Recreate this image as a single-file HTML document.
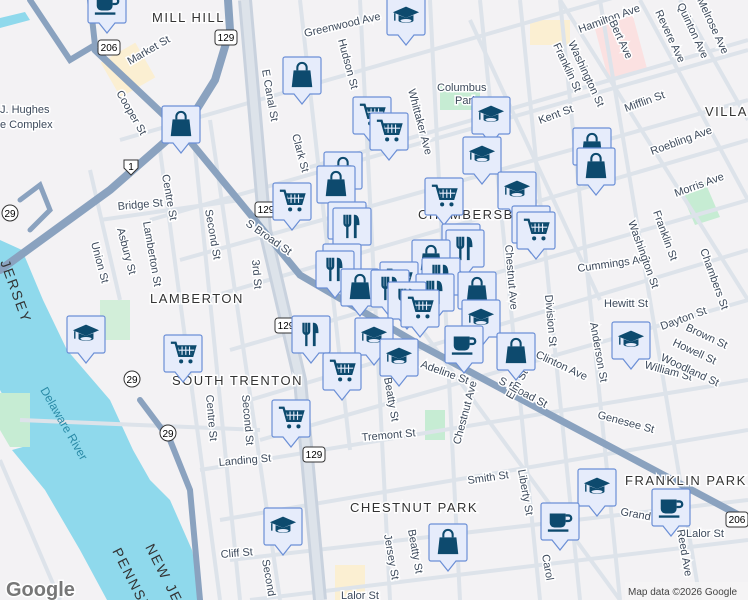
<!DOCTYPE html>
<html><head><meta charset="utf-8"><style>
html,body{margin:0;padding:0;background:#f3f2f4;width:748px;height:600px;overflow:hidden;}
svg{display:block;}
text{font-family:"Liberation Sans",sans-serif;}
.st{font-size:11px;fill:#3d4a5c;stroke:#fff;stroke-width:3px;paint-order:stroke;}
.nb{font-size:13px;fill:#333;letter-spacing:1.5px;stroke:#fff;stroke-width:3px;paint-order:stroke;}
</style></head><body>
<svg width="748" height="600" viewBox="0 0 748 600" xmlns="http://www.w3.org/2000/svg">
<defs>
<symbol id="cart" viewBox="0 0 30 30"><path d="M2 4h5l4 14h14l3-10H9" fill="none" stroke="#0d4a6e" stroke-width="2.5"/><path d="M10 8h17l-3 9H12z" fill="#0d4a6e"/><path d="M14 8v9M18 8v9M22 8v9M10 12h17" stroke="#e6ecfb" stroke-width="1.2"/><circle cx="13" cy="24" r="2.2" fill="#0d4a6e"/><circle cx="23" cy="24" r="2.2" fill="#0d4a6e"/></symbol>
<symbol id="bag" viewBox="0 0 30 30"><path d="M10 10V7a5 5 0 0 1 10 0v3" fill="none" stroke="#0d4a6e" stroke-width="2.2"/><path d="M6 10h18l2 18H4z" fill="#0d4a6e"/></symbol>
<symbol id="fork" viewBox="0 0 30 30"><path d="M7 3v9a3 3 0 0 0 6 0V3M10 3v25" fill="none" stroke="#0d4a6e" stroke-width="2.5"/><path d="M18 3c4 0 5 5 5 11h-3v14h-3V3z" fill="#0d4a6e"/></symbol>
<symbol id="grad" viewBox="0 0 30 30"><path d="M15 5L1 11l14 6 14-6z" fill="#0d4a6e"/><path d="M7 14v6c0 3 16 3 16 0v-6l-8 3z" fill="#0d4a6e"/><ellipse cx="15" cy="20" rx="6" ry="1.8" fill="#e6ecfb"/><path d="M3 12v8" stroke="#0d4a6e" stroke-width="1.5"/></symbol>
<symbol id="cup" viewBox="0 0 30 30"><path d="M4 7h17v10a5 5 0 0 1-5 5H9a5 5 0 0 1-5-5z" fill="#0d4a6e"/><path d="M21 9h3a3 3 0 0 1 0 6h-3" fill="none" stroke="#0d4a6e" stroke-width="2.5"/><rect x="2" y="24" width="22" height="2.5" fill="#0d4a6e"/></symbol>
<g id="mk"><path d="M-19 2a2 2 0 0 1 2-2h34a2 2 0 0 1 2 2v33a2 2 0 0 1-2 2H8l-8 10-8-10h-9a2 2 0 0 1-2-2z" fill="#e6ecfb" stroke="#6b8fd6" stroke-width="1.2"/></g>
</defs>

<!-- water -->
<path d="M0 240 L22 250 L43 300 L67 350 L110 400 L133 450 L150 480 L170 500 L192 550 L202 600 L107 600 L80 550 L45 490 L12 450 L30 445 L0 390 Z" fill="#8fd9ec"/>
<path d="M0 393 L30 393 L30 447 L10 447 L0 430Z" fill="#c6ecd3"/>
<path d="M0 18 L25 12 L30 20 L0 28Z" fill="#8fd9ec"/>
<!-- parks -->
<rect x="440" y="85" width="40" height="25" fill="#c6ecd3"/>
<path d="M680 190 l25 -8 l15 35 l-25 8z" fill="#c6ecd3"/>
<rect x="425" y="410" width="20" height="30" fill="#c6ecd3"/>
<rect x="100" y="300" width="30" height="40" fill="#d2eed9"/>
<rect x="530" y="20" width="40" height="25" fill="#fbefd2"/>
<rect x="600" y="20" width="40" height="55" fill="#fbe1e1" transform="rotate(-15 620 45)"/>
<rect x="108" y="50" width="40" height="40" fill="#fbefd2" transform="rotate(-30 128 70)"/>
<rect x="335" y="565" width="30" height="35" fill="#fbefd2"/>

<!-- minor streets -->
<g stroke="#dde3ea" stroke-width="4" fill="none">
<path d="M120 140 L640 -10"/><path d="M150 220 L748 50"/><path d="M180 260 L748 100"/><path d="M300 170 L748 40"/>
<path d="M200 300 L748 140"/><path d="M230 350 L748 200"/><path d="M250 400 L748 250"/><path d="M260 440 L748 300"/>
<path d="M200 470 L748 380"/><path d="M220 520 L748 430"/><path d="M230 560 L748 500"/><path d="M250 600 L748 540"/>
<path d="M160 150 L220 600"/><path d="M195 150 L240 600"/><path d="M210 120 L280 600"/><path d="M360 0 L390 600"/>
<path d="M300 0 L350 450"/><path d="M430 0 L460 600"/><path d="M480 0 L540 600"/><path d="M520 0 L580 600"/>
<path d="M560 0 L620 600"/><path d="M600 0 L700 600"/><path d="M470 20 L600 300"/><path d="M560 0 L748 300"/>
<path d="M640 0 L748 200"/><path d="M680 0 L748 120"/><path d="M90 170 L120 300"/><path d="M400 300 L620 600"/>
<path d="M100 220 L240 200"/><path d="M20 420 L260 430"/><path d="M0 460 L60 600"/>
</g>
<!-- Route 129 corridor -->
<path d="M245 0 L265 230 L300 380 L320 600" stroke="#c9d2de" stroke-width="14" fill="none"/>
<path d="M245 0 L265 230 L300 380 L320 600" stroke="#dde3ea" stroke-width="8" fill="none"/>
<!-- highways -->
<g stroke="#8aa2bf" fill="none" stroke-linecap="round">
<path d="M0 270 L110 190 L190 120 L215 80 L230 30 L228 0" stroke-width="8"/>
<path d="M30 0 L60 45 L70 60 L95 45 L90 0" stroke-width="6"/>
<path d="M95 50 L185 135 L300 275 L420 345 L560 420 L748 520" stroke-width="7"/>
<path d="M140 400 L170 440 L190 490 L200 600" stroke-width="6"/>
<path d="M20 200 L40 185 L50 210 L30 230" stroke-width="5"/>
</g>
<!-- route markers -->
<g font-size="10" text-anchor="middle">
<circle cx="10" cy="213" r="8" fill="#fff" stroke="#333"/><text x="10" y="217">29</text>
<circle cx="132" cy="379" r="8" fill="#fff" stroke="#333"/><text x="132" y="383">29</text>
<circle cx="168" cy="433" r="8" fill="#fff" stroke="#333"/><text x="168" y="437">29</text>
<rect x="98" y="40" width="22" height="15" rx="3" fill="#fff" stroke="#333"/><text x="109" y="51">206</text>
<rect x="215" y="30" width="22" height="15" rx="3" fill="#fff" stroke="#333"/><text x="226" y="41">129</text>
<rect x="255" y="202" width="22" height="15" rx="3" fill="#fff" stroke="#333"/><text x="266" y="213">129</text>
<rect x="275" y="318" width="22" height="15" rx="3" fill="#fff" stroke="#333"/><text x="286" y="329">129</text>
<rect x="303" y="447" width="22" height="15" rx="3" fill="#fff" stroke="#333"/><text x="314" y="458">129</text>
<rect x="726" y="512" width="22" height="15" rx="3" fill="#fff" stroke="#333"/><text x="737" y="523">206</text>
<path d="M124 160 h14 v8 l-7 7 l-7 -7z" fill="#fff" stroke="#333"/><text x="131" y="170">1</text>
</g>

<!-- labels -->
<text class="nb" x="152" y="22">MILL HILL</text>
<text class="nb" x="150" y="303">LAMBERTON</text>
<text class="nb" x="172" y="385">SOUTH TRENTON</text>
<text class="nb" x="418" y="219">CHAMBERSBURG</text>
<text class="nb" x="350" y="512">CHESTNUT PARK</text>
<text class="nb" x="625" y="485">FRANKLIN PARK</text>
<text class="nb" x="705" y="116">VILLA</text>
<text class="st" x="0" y="113" font-size="14">J. Hughes</text>
<text class="st" x="0" y="128" font-size="14">e Complex</text>
<text class="st" x="437" y="91" fill="#2e8b57" font-size="12">Columbus</text>
<text class="st" x="455" y="104" fill="#2e8b57" font-size="12">Park</text>
<text class="st" transform="translate(305 37) rotate(-13)">Greenwood Ave</text>
<text class="st" transform="translate(580 33) rotate(-20)" font-size="13">Hamilton Ave</text>
<text class="st" transform="translate(130 65) rotate(-30)" font-size="12">Market St</text>
<text class="st" transform="translate(118 210) rotate(-5)">Bridge St</text>
<text class="st" transform="translate(245 225) rotate(35)" font-size="12">S Broad St</text>
<text class="st" transform="translate(498 383) rotate(28)" font-size="12">S Broad St</text>
<text class="st" transform="translate(535 357) rotate(25)" font-size="12">Clinton Ave</text>
<text class="st" transform="translate(578 272) rotate(-8)">Cummings Ave</text>
<text class="st" x="604" y="307">Hewitt St</text>
<text class="st" x="644" y="368" transform="rotate(15 644 368)">William St</text>
<text class="st" x="597" y="418" transform="rotate(15 597 418)">Genesee St</text>
<text class="st" x="362" y="441" transform="rotate(-5 362 441)">Tremont St</text>
<text class="st" x="468" y="484" transform="rotate(-8 468 484)">Smith St</text>
<text class="st" x="219" y="466" transform="rotate(-5 219 466)">Landing St</text>
<text class="st" x="221" y="558" transform="rotate(-5 221 558)">Cliff St</text>
<text class="st" x="341" y="599" font-size="12">Lalor St</text>
<text class="st" x="686" y="537" font-size="12">Lalor St</text>
<text class="st" x="540" y="124" transform="rotate(-20 540 124)">Kent St</text>
<text class="st" x="626" y="112" transform="rotate(-20 626 112)">Mifflin St</text>
<text class="st" x="652" y="155" transform="rotate(-20 652 155)">Roebling Ave</text>
<text class="st" x="676" y="197" transform="rotate(-20 676 197)">Morris Ave</text>
<text class="st" x="568" y="43" transform="rotate(65 568 43)">Washington St</text>
<text class="st" x="553" y="45" transform="rotate(65 553 45)">Franklin St</text>
<text class="st" x="609" y="22" transform="rotate(65 609 22)">Bert Ave</text>
<text class="st" x="655" y="12" transform="rotate(65 655 12)">Revere Ave</text>
<text class="st" x="677" y="5" transform="rotate(65 677 5)">Quinton Ave</text>
<text class="st" x="697" y="0" transform="rotate(65 697 0)">Melrose Ave</text>
<text class="st" x="700" y="250" transform="rotate(70 700 250)" font-size="12">Chambers St</text>
<text class="st" x="338" y="40" transform="rotate(75 338 40)">Hudson St</text>
<text class="st" x="408" y="90" transform="rotate(75 408 90)">Whittaker Ave</text>
<text class="st" x="262" y="70" transform="rotate(80 262 70)">E Canal St</text>
<text class="st" x="292" y="135" transform="rotate(75 292 135)">Clark St</text>
<text class="st" x="162" y="175" transform="rotate(80 162 175)">Centre St</text>
<text class="st" x="205" y="210" transform="rotate(80 205 210)">Second St</text>
<text class="st" x="143" y="222" transform="rotate(80 143 222)">Lamberton St</text>
<text class="st" x="117" y="229" transform="rotate(75 117 229)">Asbury St</text>
<text class="st" x="91" y="243" transform="rotate(75 91 243)">Union St</text>
<text class="st" x="116" y="93" transform="rotate(60 116 93)">Cooper St</text>
<text class="st" x="505" y="245" transform="rotate(85 505 245)">Chestnut Ave</text>
<text class="st" x="545" y="295" transform="rotate(85 545 295)">Division St</text>
<text class="st" x="590" y="323" transform="rotate(80 590 323)">Anderson St</text>
<text class="st" x="628" y="222" transform="rotate(70 628 222)">Washington St</text>
<text class="st" x="653" y="212" transform="rotate(70 653 212)">Franklin St</text>
<text class="st" x="662" y="330" transform="rotate(-20 662 330)">Dayton St</text>
<text class="st" x="685" y="330" transform="rotate(25 685 330)">Brown St</text>
<text class="st" x="672" y="345" transform="rotate(25 672 345)">Howell St</text>
<text class="st" x="660" y="360" transform="rotate(25 660 360)">Woodland St</text>
<text class="st" x="512" y="400" transform="rotate(-60 512 400)">Elm St</text>
<text class="st" x="460" y="445" transform="rotate(-75 460 445)">Chestnut Ave</text>
<text class="st" x="420" y="367" transform="rotate(20 420 367)">Adeline St</text>
<text class="st" x="384" y="378" transform="rotate(80 384 378)">Beatty St</text>
<text class="st" x="542" y="555" transform="rotate(80 542 555)">Carol</text>
<text class="st" x="518" y="470" transform="rotate(80 518 470)">Liberty St</text>
<text class="st" x="384" y="535" transform="rotate(80 384 535)">Jersey St</text>
<text class="st" x="408" y="530" transform="rotate(80 408 530)">Beatty St</text>
<text class="st" x="262" y="560" transform="rotate(80 262 560)">Second</text>
<text class="st" x="242" y="395" transform="rotate(85 242 395)">Second St</text>
<text class="st" x="206" y="395" transform="rotate(85 206 395)">Centre St</text>
<text class="st" x="252" y="260" transform="rotate(85 252 260)">3rd St</text>
<text class="st" x="677" y="530" transform="rotate(80 677 530)">Reed Ave</text>
<text class="st" x="620" y="515" transform="rotate(10 620 515)">Grand St</text>
<text transform="translate(40 390) rotate(60)" font-size="12" fill="#2a8aa6">Delaware River</text>
<text transform="translate(0 262) rotate(70)" font-size="14" fill="#333" letter-spacing="2">JERSEY</text>
<text transform="translate(145 547) rotate(63)" font-size="14" fill="#333" letter-spacing="2">NEW JERSEY</text>
<text transform="translate(112 551) rotate(63)" font-size="14" fill="#333" letter-spacing="2">PENNSYLV</text>
<text x="6" y="596" font-size="20" font-weight="bold" fill="#777" stroke="#fff" stroke-width="3" paint-order="stroke">Google</text>
<rect x="625" y="582" width="123" height="18" fill="#f5f5f5" opacity="0.85"/>
<text x="628" y="595" font-size="10" fill="#444">Map data ©2026 Google</text>

<!-- markers -->
<g>
<g transform="translate(107,-14)"><use href="#mk"/><use href="#cup" x="-14" y="4" width="28" height="28"/></g>
<g transform="translate(406,-2)"><use href="#mk"/><use href="#grad" x="-14" y="4" width="28" height="28"/></g>
<g transform="translate(302,57)"><use href="#mk"/><use href="#bag" x="-14" y="4" width="28" height="28"/></g>
<g transform="translate(372,97)"><use href="#mk"/><use href="#cart" x="-14" y="4" width="28" height="28"/></g>
<g transform="translate(389,113)"><use href="#mk"/><use href="#cart" x="-14" y="4" width="28" height="28"/></g>
<g transform="translate(491,97)"><use href="#mk"/><use href="#grad" x="-14" y="4" width="28" height="28"/></g>
<g transform="translate(482,137)"><use href="#mk"/><use href="#grad" x="-14" y="4" width="28" height="28"/></g>
<g transform="translate(592,128)"><use href="#mk"/><use href="#bag" x="-14" y="4" width="28" height="28"/></g>
<g transform="translate(596,148)"><use href="#mk"/><use href="#bag" x="-14" y="4" width="28" height="28"/></g>
<g transform="translate(181,106)"><use href="#mk"/><use href="#bag" x="-14" y="4" width="28" height="28"/></g>
<g transform="translate(343,152)"><use href="#mk"/><use href="#bag" x="-14" y="4" width="28" height="28"/></g>
<g transform="translate(336,166)"><use href="#mk"/><use href="#bag" x="-14" y="4" width="28" height="28"/></g>
<g transform="translate(292,183)"><use href="#mk"/><use href="#cart" x="-14" y="4" width="28" height="28"/></g>
<g transform="translate(444,178)"><use href="#mk"/><use href="#cart" x="-14" y="4" width="28" height="28"/></g>
<g transform="translate(517,172)"><use href="#mk"/><use href="#grad" x="-14" y="4" width="28" height="28"/></g>
<g transform="translate(347,202)"><use href="#mk"/><use href="#fork" x="-14" y="4" width="28" height="28"/></g>
<g transform="translate(352,208)"><use href="#mk"/><use href="#fork" x="-14" y="4" width="28" height="28"/></g>
<g transform="translate(531,206)"><use href="#mk"/><use href="#cart" x="-14" y="4" width="28" height="28"/></g>
<g transform="translate(536,212)"><use href="#mk"/><use href="#cart" x="-14" y="4" width="28" height="28"/></g>
<g transform="translate(461,224)"><use href="#mk"/><use href="#fork" x="-14" y="4" width="28" height="28"/></g>
<g transform="translate(465,230)"><use href="#mk"/><use href="#fork" x="-14" y="4" width="28" height="28"/></g>
<g transform="translate(342,244)"><use href="#mk"/><use href="#fork" x="-14" y="4" width="28" height="28"/></g>
<g transform="translate(335,251)"><use href="#mk"/><use href="#fork" x="-14" y="4" width="28" height="28"/></g>
<g transform="translate(431,240)"><use href="#mk"/><use href="#bag" x="-14" y="4" width="28" height="28"/></g>
<g transform="translate(399,262)"><use href="#mk"/><use href="#cart" x="-14" y="4" width="28" height="28"/></g>
<g transform="translate(360,269)"><use href="#mk"/><use href="#bag" x="-14" y="4" width="28" height="28"/></g>
<g transform="translate(441,258)"><use href="#mk"/><use href="#fork" x="-14" y="4" width="28" height="28"/></g>
<g transform="translate(390,270)"><use href="#mk"/><use href="#fork" x="-14" y="4" width="28" height="28"/></g>
<g transform="translate(435,274)"><use href="#mk"/><use href="#fork" x="-14" y="4" width="28" height="28"/></g>
<g transform="translate(477,272)"><use href="#mk"/><use href="#bag" x="-14" y="4" width="28" height="28"/></g>
<g transform="translate(407,282)"><use href="#mk"/><use href="#fork" x="-14" y="4" width="28" height="28"/></g>
<g transform="translate(420,290)"><use href="#mk"/><use href="#cart" x="-14" y="4" width="28" height="28"/></g>
<g transform="translate(481,300)"><use href="#mk"/><use href="#grad" x="-14" y="4" width="28" height="28"/></g>
<g transform="translate(311,316)"><use href="#mk"/><use href="#fork" x="-14" y="4" width="28" height="28"/></g>
<g transform="translate(374,318)"><use href="#mk"/><use href="#grad" x="-14" y="4" width="28" height="28"/></g>
<g transform="translate(464,326)"><use href="#mk"/><use href="#cup" x="-14" y="4" width="28" height="28"/></g>
<g transform="translate(516,333)"><use href="#mk"/><use href="#bag" x="-14" y="4" width="28" height="28"/></g>
<g transform="translate(631,322)"><use href="#mk"/><use href="#grad" x="-14" y="4" width="28" height="28"/></g>
<g transform="translate(86,316)"><use href="#mk"/><use href="#grad" x="-14" y="4" width="28" height="28"/></g>
<g transform="translate(183,335)"><use href="#mk"/><use href="#cart" x="-14" y="4" width="28" height="28"/></g>
<g transform="translate(399,339)"><use href="#mk"/><use href="#grad" x="-14" y="4" width="28" height="28"/></g>
<g transform="translate(342,353)"><use href="#mk"/><use href="#cart" x="-14" y="4" width="28" height="28"/></g>
<g transform="translate(291,400)"><use href="#mk"/><use href="#cart" x="-14" y="4" width="28" height="28"/></g>
<g transform="translate(597,469)"><use href="#mk"/><use href="#grad" x="-14" y="4" width="28" height="28"/></g>
<g transform="translate(671,489)"><use href="#mk"/><use href="#cup" x="-14" y="4" width="28" height="28"/></g>
<g transform="translate(560,503)"><use href="#mk"/><use href="#cup" x="-14" y="4" width="28" height="28"/></g>
<g transform="translate(283,508)"><use href="#mk"/><use href="#grad" x="-14" y="4" width="28" height="28"/></g>
<g transform="translate(448,524)"><use href="#mk"/><use href="#bag" x="-14" y="4" width="28" height="28"/></g>
</g>
</svg>
</body></html>
